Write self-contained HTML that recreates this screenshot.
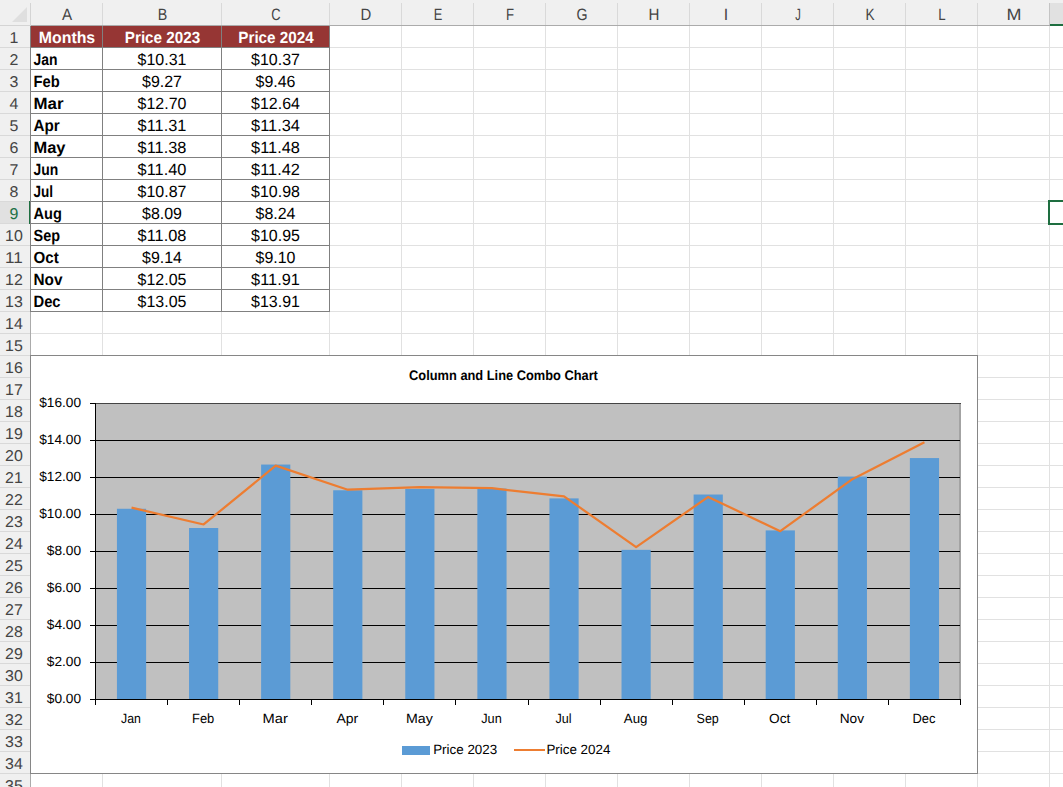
<!DOCTYPE html><html><head><meta charset="utf-8"><style>html,body{margin:0;padding:0;background:#fff;overflow:hidden}svg{display:block}text{text-rendering:geometricPrecision;font-family:"Liberation Sans",sans-serif}</style></head><body>
<svg width="1063" height="787" viewBox="0 0 1063 787">
<rect x="0" y="0" width="1063" height="26" fill="#f0f0f0"/>
<rect x="0" y="0" width="30" height="787" fill="#f0f0f0"/>
<rect x="1050" y="3" width="13" height="22" fill="#e1e1e1"/>
<rect x="0" y="202" width="29" height="21" fill="#e1e1e1"/>
<g shape-rendering="crispEdges">
<rect x="31" y="47" width="1032" height="1" fill="#e1e1e1"/>
<rect x="0" y="47" width="30" height="1" fill="#d9d9d9"/>
<rect x="31" y="69" width="1032" height="1" fill="#e1e1e1"/>
<rect x="0" y="69" width="30" height="1" fill="#d9d9d9"/>
<rect x="31" y="91" width="1032" height="1" fill="#e1e1e1"/>
<rect x="0" y="91" width="30" height="1" fill="#d9d9d9"/>
<rect x="31" y="113" width="1032" height="1" fill="#e1e1e1"/>
<rect x="0" y="113" width="30" height="1" fill="#d9d9d9"/>
<rect x="31" y="135" width="1032" height="1" fill="#e1e1e1"/>
<rect x="0" y="135" width="30" height="1" fill="#d9d9d9"/>
<rect x="31" y="157" width="1032" height="1" fill="#e1e1e1"/>
<rect x="0" y="157" width="30" height="1" fill="#d9d9d9"/>
<rect x="31" y="179" width="1032" height="1" fill="#e1e1e1"/>
<rect x="0" y="179" width="30" height="1" fill="#d9d9d9"/>
<rect x="31" y="201" width="1032" height="1" fill="#e1e1e1"/>
<rect x="0" y="201" width="30" height="1" fill="#d9d9d9"/>
<rect x="31" y="223" width="1032" height="1" fill="#e1e1e1"/>
<rect x="0" y="223" width="30" height="1" fill="#d9d9d9"/>
<rect x="31" y="245" width="1032" height="1" fill="#e1e1e1"/>
<rect x="0" y="245" width="30" height="1" fill="#d9d9d9"/>
<rect x="31" y="267" width="1032" height="1" fill="#e1e1e1"/>
<rect x="0" y="267" width="30" height="1" fill="#d9d9d9"/>
<rect x="31" y="289" width="1032" height="1" fill="#e1e1e1"/>
<rect x="0" y="289" width="30" height="1" fill="#d9d9d9"/>
<rect x="31" y="311" width="1032" height="1" fill="#e1e1e1"/>
<rect x="0" y="311" width="30" height="1" fill="#d9d9d9"/>
<rect x="31" y="333" width="1032" height="1" fill="#e1e1e1"/>
<rect x="0" y="333" width="30" height="1" fill="#d9d9d9"/>
<rect x="31" y="355" width="1032" height="1" fill="#e1e1e1"/>
<rect x="0" y="355" width="30" height="1" fill="#d9d9d9"/>
<rect x="31" y="377" width="1032" height="1" fill="#e1e1e1"/>
<rect x="0" y="377" width="30" height="1" fill="#d9d9d9"/>
<rect x="31" y="399" width="1032" height="1" fill="#e1e1e1"/>
<rect x="0" y="399" width="30" height="1" fill="#d9d9d9"/>
<rect x="31" y="421" width="1032" height="1" fill="#e1e1e1"/>
<rect x="0" y="421" width="30" height="1" fill="#d9d9d9"/>
<rect x="31" y="443" width="1032" height="1" fill="#e1e1e1"/>
<rect x="0" y="443" width="30" height="1" fill="#d9d9d9"/>
<rect x="31" y="465" width="1032" height="1" fill="#e1e1e1"/>
<rect x="0" y="465" width="30" height="1" fill="#d9d9d9"/>
<rect x="31" y="487" width="1032" height="1" fill="#e1e1e1"/>
<rect x="0" y="487" width="30" height="1" fill="#d9d9d9"/>
<rect x="31" y="509" width="1032" height="1" fill="#e1e1e1"/>
<rect x="0" y="509" width="30" height="1" fill="#d9d9d9"/>
<rect x="31" y="531" width="1032" height="1" fill="#e1e1e1"/>
<rect x="0" y="531" width="30" height="1" fill="#d9d9d9"/>
<rect x="31" y="553" width="1032" height="1" fill="#e1e1e1"/>
<rect x="0" y="553" width="30" height="1" fill="#d9d9d9"/>
<rect x="31" y="575" width="1032" height="1" fill="#e1e1e1"/>
<rect x="0" y="575" width="30" height="1" fill="#d9d9d9"/>
<rect x="31" y="597" width="1032" height="1" fill="#e1e1e1"/>
<rect x="0" y="597" width="30" height="1" fill="#d9d9d9"/>
<rect x="31" y="619" width="1032" height="1" fill="#e1e1e1"/>
<rect x="0" y="619" width="30" height="1" fill="#d9d9d9"/>
<rect x="31" y="641" width="1032" height="1" fill="#e1e1e1"/>
<rect x="0" y="641" width="30" height="1" fill="#d9d9d9"/>
<rect x="31" y="663" width="1032" height="1" fill="#e1e1e1"/>
<rect x="0" y="663" width="30" height="1" fill="#d9d9d9"/>
<rect x="31" y="685" width="1032" height="1" fill="#e1e1e1"/>
<rect x="0" y="685" width="30" height="1" fill="#d9d9d9"/>
<rect x="31" y="707" width="1032" height="1" fill="#e1e1e1"/>
<rect x="0" y="707" width="30" height="1" fill="#d9d9d9"/>
<rect x="31" y="729" width="1032" height="1" fill="#e1e1e1"/>
<rect x="0" y="729" width="30" height="1" fill="#d9d9d9"/>
<rect x="31" y="751" width="1032" height="1" fill="#e1e1e1"/>
<rect x="0" y="751" width="30" height="1" fill="#d9d9d9"/>
<rect x="31" y="773" width="1032" height="1" fill="#e1e1e1"/>
<rect x="0" y="773" width="30" height="1" fill="#d9d9d9"/>
<rect x="102" y="26" width="1" height="761" fill="#e1e1e1"/>
<rect x="102" y="3" width="1" height="22" fill="#d9d9d9"/>
<rect x="221" y="26" width="1" height="761" fill="#e1e1e1"/>
<rect x="221" y="3" width="1" height="22" fill="#d9d9d9"/>
<rect x="329" y="26" width="1" height="761" fill="#e1e1e1"/>
<rect x="329" y="3" width="1" height="22" fill="#d9d9d9"/>
<rect x="401" y="26" width="1" height="761" fill="#e1e1e1"/>
<rect x="401" y="3" width="1" height="22" fill="#d9d9d9"/>
<rect x="473" y="26" width="1" height="761" fill="#e1e1e1"/>
<rect x="473" y="3" width="1" height="22" fill="#d9d9d9"/>
<rect x="545" y="26" width="1" height="761" fill="#e1e1e1"/>
<rect x="545" y="3" width="1" height="22" fill="#d9d9d9"/>
<rect x="617" y="26" width="1" height="761" fill="#e1e1e1"/>
<rect x="617" y="3" width="1" height="22" fill="#d9d9d9"/>
<rect x="689" y="26" width="1" height="761" fill="#e1e1e1"/>
<rect x="689" y="3" width="1" height="22" fill="#d9d9d9"/>
<rect x="761" y="26" width="1" height="761" fill="#e1e1e1"/>
<rect x="761" y="3" width="1" height="22" fill="#d9d9d9"/>
<rect x="833" y="26" width="1" height="761" fill="#e1e1e1"/>
<rect x="833" y="3" width="1" height="22" fill="#d9d9d9"/>
<rect x="905" y="26" width="1" height="761" fill="#e1e1e1"/>
<rect x="905" y="3" width="1" height="22" fill="#d9d9d9"/>
<rect x="977" y="26" width="1" height="761" fill="#e1e1e1"/>
<rect x="977" y="3" width="1" height="22" fill="#d9d9d9"/>
<rect x="1049" y="26" width="1" height="761" fill="#e1e1e1"/>
<rect x="1049" y="3" width="1" height="22" fill="#c4c4c4"/>
<rect x="31" y="25" width="1032" height="1" fill="#ababab"/>
<rect x="30" y="26" width="1" height="761" fill="#ababab"/>
<rect x="0" y="25" width="31" height="1" fill="#d4d4d4"/>
<rect x="30" y="3" width="1" height="22" fill="#d4d4d4"/>
<rect x="1050" y="24" width="13" height="2" fill="#1e6e40"/>
<rect x="29" y="201" width="2" height="23" fill="#1e6e40"/>
<rect x="1048" y="200" width="2" height="25" fill="#1e6e40"/>
<rect x="1048" y="200" width="15" height="2" fill="#1e6e40"/>
<rect x="1048" y="223" width="15" height="2" fill="#1e6e40"/>
</g>
<polygon points="27,7 27,22 12,22" fill="#dfdfdf"/>
<text x="67.00" y="20.00" font-size="16.4" fill="#444" text-anchor="middle" textLength="10.13" lengthAdjust="spacingAndGlyphs">A</text>
<text x="162.50" y="20.00" font-size="16.4" fill="#444" text-anchor="middle" textLength="9.52" lengthAdjust="spacingAndGlyphs">B</text>
<text x="276.00" y="20.00" font-size="16.4" fill="#444" text-anchor="middle" textLength="9.33" lengthAdjust="spacingAndGlyphs">C</text>
<text x="366.00" y="20.00" font-size="16.4" fill="#444" text-anchor="middle" textLength="10.77" lengthAdjust="spacingAndGlyphs">D</text>
<text x="438.00" y="20.00" font-size="16.4" fill="#444" text-anchor="middle" textLength="8.54" lengthAdjust="spacingAndGlyphs">E</text>
<text x="510.00" y="20.00" font-size="16.4" fill="#444" text-anchor="middle" textLength="8.04" lengthAdjust="spacingAndGlyphs">F</text>
<text x="582.00" y="20.00" font-size="16.4" fill="#444" text-anchor="middle" textLength="11.04" lengthAdjust="spacingAndGlyphs">G</text>
<text x="654.00" y="20.00" font-size="16.4" fill="#444" text-anchor="middle" textLength="10.90" lengthAdjust="spacingAndGlyphs">H</text>
<text x="726.00" y="20.00" font-size="16.4" fill="#444" text-anchor="middle" textLength="4.41" lengthAdjust="spacingAndGlyphs">I</text>
<text x="798.00" y="20.00" font-size="16.4" fill="#444" text-anchor="middle" textLength="5.58" lengthAdjust="spacingAndGlyphs">J</text>
<text x="870.00" y="20.00" font-size="16.4" fill="#444" text-anchor="middle" textLength="9.09" lengthAdjust="spacingAndGlyphs">K</text>
<text x="942.00" y="20.00" font-size="16.4" fill="#444" text-anchor="middle" textLength="7.36" lengthAdjust="spacingAndGlyphs">L</text>
<text x="1014.00" y="20.00" font-size="16.4" fill="#444" text-anchor="middle" textLength="14.96" lengthAdjust="spacingAndGlyphs">M</text>
<text x="14.00" y="43.00" font-size="15.6" fill="#444" text-anchor="middle" textLength="8.87" lengthAdjust="spacingAndGlyphs">1</text>
<text x="14.00" y="65.00" font-size="15.6" fill="#444" text-anchor="middle" textLength="8.87" lengthAdjust="spacingAndGlyphs">2</text>
<text x="14.00" y="87.00" font-size="15.6" fill="#444" text-anchor="middle" textLength="8.87" lengthAdjust="spacingAndGlyphs">3</text>
<text x="14.00" y="109.00" font-size="15.6" fill="#444" text-anchor="middle" textLength="8.87" lengthAdjust="spacingAndGlyphs">4</text>
<text x="14.00" y="131.00" font-size="15.6" fill="#444" text-anchor="middle" textLength="8.87" lengthAdjust="spacingAndGlyphs">5</text>
<text x="14.00" y="153.00" font-size="15.6" fill="#444" text-anchor="middle" textLength="8.87" lengthAdjust="spacingAndGlyphs">6</text>
<text x="14.00" y="175.00" font-size="15.6" fill="#444" text-anchor="middle" textLength="8.87" lengthAdjust="spacingAndGlyphs">7</text>
<text x="14.00" y="197.00" font-size="15.6" fill="#444" text-anchor="middle" textLength="8.87" lengthAdjust="spacingAndGlyphs">8</text>
<text x="14.00" y="219.00" font-size="15.6" fill="#1e7145" text-anchor="middle" textLength="8.87" lengthAdjust="spacingAndGlyphs">9</text>
<text x="14.00" y="241.00" font-size="15.6" fill="#444" text-anchor="middle" textLength="17.74" lengthAdjust="spacingAndGlyphs">10</text>
<text x="14.00" y="263.00" font-size="15.6" fill="#444" text-anchor="middle" textLength="17.74" lengthAdjust="spacingAndGlyphs">11</text>
<text x="14.00" y="285.00" font-size="15.6" fill="#444" text-anchor="middle" textLength="17.74" lengthAdjust="spacingAndGlyphs">12</text>
<text x="14.00" y="307.00" font-size="15.6" fill="#444" text-anchor="middle" textLength="17.74" lengthAdjust="spacingAndGlyphs">13</text>
<text x="14.00" y="329.00" font-size="15.6" fill="#444" text-anchor="middle" textLength="17.74" lengthAdjust="spacingAndGlyphs">14</text>
<text x="14.00" y="351.00" font-size="15.6" fill="#444" text-anchor="middle" textLength="17.74" lengthAdjust="spacingAndGlyphs">15</text>
<text x="14.00" y="373.00" font-size="15.6" fill="#444" text-anchor="middle" textLength="17.74" lengthAdjust="spacingAndGlyphs">16</text>
<text x="14.00" y="395.00" font-size="15.6" fill="#444" text-anchor="middle" textLength="17.74" lengthAdjust="spacingAndGlyphs">17</text>
<text x="14.00" y="417.00" font-size="15.6" fill="#444" text-anchor="middle" textLength="17.74" lengthAdjust="spacingAndGlyphs">18</text>
<text x="14.00" y="439.00" font-size="15.6" fill="#444" text-anchor="middle" textLength="17.74" lengthAdjust="spacingAndGlyphs">19</text>
<text x="14.00" y="461.00" font-size="15.6" fill="#444" text-anchor="middle" textLength="17.74" lengthAdjust="spacingAndGlyphs">20</text>
<text x="14.00" y="483.00" font-size="15.6" fill="#444" text-anchor="middle" textLength="17.74" lengthAdjust="spacingAndGlyphs">21</text>
<text x="14.00" y="505.00" font-size="15.6" fill="#444" text-anchor="middle" textLength="17.74" lengthAdjust="spacingAndGlyphs">22</text>
<text x="14.00" y="527.00" font-size="15.6" fill="#444" text-anchor="middle" textLength="17.74" lengthAdjust="spacingAndGlyphs">23</text>
<text x="14.00" y="549.00" font-size="15.6" fill="#444" text-anchor="middle" textLength="17.74" lengthAdjust="spacingAndGlyphs">24</text>
<text x="14.00" y="571.00" font-size="15.6" fill="#444" text-anchor="middle" textLength="17.74" lengthAdjust="spacingAndGlyphs">25</text>
<text x="14.00" y="593.00" font-size="15.6" fill="#444" text-anchor="middle" textLength="17.74" lengthAdjust="spacingAndGlyphs">26</text>
<text x="14.00" y="615.00" font-size="15.6" fill="#444" text-anchor="middle" textLength="17.74" lengthAdjust="spacingAndGlyphs">27</text>
<text x="14.00" y="637.00" font-size="15.6" fill="#444" text-anchor="middle" textLength="17.74" lengthAdjust="spacingAndGlyphs">28</text>
<text x="14.00" y="659.00" font-size="15.6" fill="#444" text-anchor="middle" textLength="17.74" lengthAdjust="spacingAndGlyphs">29</text>
<text x="14.00" y="681.00" font-size="15.6" fill="#444" text-anchor="middle" textLength="17.74" lengthAdjust="spacingAndGlyphs">30</text>
<text x="14.00" y="703.00" font-size="15.6" fill="#444" text-anchor="middle" textLength="17.74" lengthAdjust="spacingAndGlyphs">31</text>
<text x="14.00" y="725.00" font-size="15.6" fill="#444" text-anchor="middle" textLength="17.74" lengthAdjust="spacingAndGlyphs">32</text>
<text x="14.00" y="747.00" font-size="15.6" fill="#444" text-anchor="middle" textLength="17.74" lengthAdjust="spacingAndGlyphs">33</text>
<text x="14.00" y="769.00" font-size="15.6" fill="#444" text-anchor="middle" textLength="17.74" lengthAdjust="spacingAndGlyphs">34</text>
<text x="14.00" y="791.00" font-size="15.6" fill="#444" text-anchor="middle" textLength="17.74" lengthAdjust="spacingAndGlyphs">35</text>
<rect x="31" y="26" width="298" height="21" fill="#963634"/>
<g shape-rendering="crispEdges">
<rect x="30" y="47" width="300" height="1" fill="#808080"/>
<rect x="30" y="69" width="300" height="1" fill="#808080"/>
<rect x="30" y="91" width="300" height="1" fill="#808080"/>
<rect x="30" y="113" width="300" height="1" fill="#808080"/>
<rect x="30" y="135" width="300" height="1" fill="#808080"/>
<rect x="30" y="157" width="300" height="1" fill="#808080"/>
<rect x="30" y="179" width="300" height="1" fill="#808080"/>
<rect x="30" y="201" width="300" height="1" fill="#808080"/>
<rect x="30" y="223" width="300" height="1" fill="#808080"/>
<rect x="30" y="245" width="300" height="1" fill="#808080"/>
<rect x="30" y="267" width="300" height="1" fill="#808080"/>
<rect x="30" y="289" width="300" height="1" fill="#808080"/>
<rect x="30" y="311" width="300" height="1" fill="#808080"/>
<rect x="30" y="26" width="1" height="286" fill="#808080"/>
<rect x="102" y="26" width="1" height="286" fill="#808080"/>
<rect x="221" y="26" width="1" height="286" fill="#808080"/>
<rect x="329" y="26" width="1" height="286" fill="#808080"/>
</g>
<text x="67.00" y="43.20" font-size="16.3" font-weight="bold" fill="#fff" text-anchor="middle" textLength="56.39" lengthAdjust="spacingAndGlyphs">Months</text>
<text x="162.50" y="43.20" font-size="16.3" font-weight="bold" fill="#fff" text-anchor="middle" textLength="75.38" lengthAdjust="spacingAndGlyphs">Price 2023</text>
<text x="276.00" y="43.20" font-size="16.3" font-weight="bold" fill="#fff" text-anchor="middle" textLength="75.38" lengthAdjust="spacingAndGlyphs">Price 2024</text>
<text x="33.50" y="64.80" font-size="16.3" font-weight="bold" fill="#000" textLength="23.96" lengthAdjust="spacingAndGlyphs">Jan</text>
<text x="162.00" y="64.80" font-size="16.3" fill="#000" text-anchor="middle" textLength="48.77" lengthAdjust="spacingAndGlyphs">$10.31</text>
<text x="275.50" y="64.80" font-size="16.3" fill="#000" text-anchor="middle" textLength="48.77" lengthAdjust="spacingAndGlyphs">$10.37</text>
<text x="33.50" y="86.80" font-size="16.3" font-weight="bold" fill="#000" textLength="26.23" lengthAdjust="spacingAndGlyphs">Feb</text>
<text x="162.00" y="86.80" font-size="16.3" fill="#000" text-anchor="middle" textLength="39.90" lengthAdjust="spacingAndGlyphs">$9.27</text>
<text x="275.50" y="86.80" font-size="16.3" fill="#000" text-anchor="middle" textLength="39.90" lengthAdjust="spacingAndGlyphs">$9.46</text>
<text x="33.50" y="108.80" font-size="16.3" font-weight="bold" fill="#000" textLength="29.99" lengthAdjust="spacingAndGlyphs">Mar</text>
<text x="162.00" y="108.80" font-size="16.3" fill="#000" text-anchor="middle" textLength="48.77" lengthAdjust="spacingAndGlyphs">$12.70</text>
<text x="275.50" y="108.80" font-size="16.3" fill="#000" text-anchor="middle" textLength="48.77" lengthAdjust="spacingAndGlyphs">$12.64</text>
<text x="33.50" y="130.80" font-size="16.3" font-weight="bold" fill="#000" textLength="26.22" lengthAdjust="spacingAndGlyphs">Apr</text>
<text x="162.00" y="130.80" font-size="16.3" fill="#000" text-anchor="middle" textLength="48.77" lengthAdjust="spacingAndGlyphs">$11.31</text>
<text x="275.50" y="130.80" font-size="16.3" fill="#000" text-anchor="middle" textLength="48.77" lengthAdjust="spacingAndGlyphs">$11.34</text>
<text x="33.50" y="152.80" font-size="16.3" font-weight="bold" fill="#000" textLength="32.03" lengthAdjust="spacingAndGlyphs">May</text>
<text x="162.00" y="152.80" font-size="16.3" fill="#000" text-anchor="middle" textLength="48.77" lengthAdjust="spacingAndGlyphs">$11.38</text>
<text x="275.50" y="152.80" font-size="16.3" fill="#000" text-anchor="middle" textLength="48.77" lengthAdjust="spacingAndGlyphs">$11.48</text>
<text x="33.50" y="174.80" font-size="16.3" font-weight="bold" fill="#000" textLength="24.72" lengthAdjust="spacingAndGlyphs">Jun</text>
<text x="162.00" y="174.80" font-size="16.3" fill="#000" text-anchor="middle" textLength="48.77" lengthAdjust="spacingAndGlyphs">$11.40</text>
<text x="275.50" y="174.80" font-size="16.3" fill="#000" text-anchor="middle" textLength="48.77" lengthAdjust="spacingAndGlyphs">$11.42</text>
<text x="33.50" y="196.80" font-size="16.3" font-weight="bold" fill="#000" textLength="19.59" lengthAdjust="spacingAndGlyphs">Jul</text>
<text x="162.00" y="196.80" font-size="16.3" fill="#000" text-anchor="middle" textLength="48.77" lengthAdjust="spacingAndGlyphs">$10.87</text>
<text x="275.50" y="196.80" font-size="16.3" fill="#000" text-anchor="middle" textLength="48.77" lengthAdjust="spacingAndGlyphs">$10.98</text>
<text x="33.50" y="218.80" font-size="16.3" font-weight="bold" fill="#000" textLength="28.34" lengthAdjust="spacingAndGlyphs">Aug</text>
<text x="162.00" y="218.80" font-size="16.3" fill="#000" text-anchor="middle" textLength="39.90" lengthAdjust="spacingAndGlyphs">$8.09</text>
<text x="275.50" y="218.80" font-size="16.3" fill="#000" text-anchor="middle" textLength="39.90" lengthAdjust="spacingAndGlyphs">$8.24</text>
<text x="33.50" y="240.80" font-size="16.3" font-weight="bold" fill="#000" textLength="26.49" lengthAdjust="spacingAndGlyphs">Sep</text>
<text x="162.00" y="240.80" font-size="16.3" fill="#000" text-anchor="middle" textLength="48.77" lengthAdjust="spacingAndGlyphs">$11.08</text>
<text x="275.50" y="240.80" font-size="16.3" fill="#000" text-anchor="middle" textLength="48.77" lengthAdjust="spacingAndGlyphs">$10.95</text>
<text x="33.50" y="262.80" font-size="16.3" font-weight="bold" fill="#000" textLength="25.21" lengthAdjust="spacingAndGlyphs">Oct</text>
<text x="162.00" y="262.80" font-size="16.3" fill="#000" text-anchor="middle" textLength="39.90" lengthAdjust="spacingAndGlyphs">$9.14</text>
<text x="275.50" y="262.80" font-size="16.3" fill="#000" text-anchor="middle" textLength="39.90" lengthAdjust="spacingAndGlyphs">$9.10</text>
<text x="33.50" y="284.80" font-size="16.3" font-weight="bold" fill="#000" textLength="28.99" lengthAdjust="spacingAndGlyphs">Nov</text>
<text x="162.00" y="284.80" font-size="16.3" fill="#000" text-anchor="middle" textLength="48.77" lengthAdjust="spacingAndGlyphs">$12.05</text>
<text x="275.50" y="284.80" font-size="16.3" fill="#000" text-anchor="middle" textLength="48.77" lengthAdjust="spacingAndGlyphs">$11.91</text>
<text x="33.50" y="306.80" font-size="16.3" font-weight="bold" fill="#000" textLength="27.09" lengthAdjust="spacingAndGlyphs">Dec</text>
<text x="162.00" y="306.80" font-size="16.3" fill="#000" text-anchor="middle" textLength="48.77" lengthAdjust="spacingAndGlyphs">$13.05</text>
<text x="275.50" y="306.80" font-size="16.3" fill="#000" text-anchor="middle" textLength="48.77" lengthAdjust="spacingAndGlyphs">$13.91</text>
<g shape-rendering="crispEdges">
<rect x="30.5" y="355.5" width="947" height="418" fill="#fff" stroke="#868686" stroke-width="1"/>
<rect x="95" y="403" width="865" height="296" fill="#c0c0c0"/>
<rect x="959" y="403" width="2" height="296" fill="#a3a3a3"/>
<rect x="90" y="403" width="5" height="1" fill="#000"/>
<rect x="95" y="403" width="866" height="1" fill="#444"/>
<rect x="90" y="440" width="870" height="1" fill="#000"/>
<rect x="90" y="477" width="870" height="1" fill="#000"/>
<rect x="90" y="514" width="870" height="1" fill="#000"/>
<rect x="90" y="551" width="870" height="1" fill="#000"/>
<rect x="90" y="588" width="870" height="1" fill="#000"/>
<rect x="90" y="625" width="870" height="1" fill="#000"/>
<rect x="90" y="662" width="870" height="1" fill="#000"/>
<rect x="95" y="403" width="1" height="297" fill="#000"/>
</g>
<rect x="116.94" y="508.76" width="29.2" height="190.74" fill="#5b9bd5"/>
<rect x="189.03" y="528.00" width="29.2" height="171.50" fill="#5b9bd5"/>
<rect x="261.11" y="464.55" width="29.2" height="234.95" fill="#5b9bd5"/>
<rect x="333.19" y="490.26" width="29.2" height="209.24" fill="#5b9bd5"/>
<rect x="405.27" y="488.97" width="29.2" height="210.53" fill="#5b9bd5"/>
<rect x="477.36" y="488.60" width="29.2" height="210.90" fill="#5b9bd5"/>
<rect x="549.44" y="498.40" width="29.2" height="201.09" fill="#5b9bd5"/>
<rect x="621.52" y="549.84" width="29.2" height="149.66" fill="#5b9bd5"/>
<rect x="693.61" y="494.52" width="29.2" height="204.98" fill="#5b9bd5"/>
<rect x="765.69" y="530.41" width="29.2" height="169.09" fill="#5b9bd5"/>
<rect x="837.77" y="476.57" width="29.2" height="222.93" fill="#5b9bd5"/>
<rect x="909.86" y="458.07" width="29.2" height="241.43" fill="#5b9bd5"/>
<g shape-rendering="crispEdges">
<rect x="90" y="699" width="871" height="1" fill="#000"/>
<rect x="95" y="699" width="1" height="6" fill="#000"/>
<rect x="167" y="699" width="1" height="6" fill="#000"/>
<rect x="239" y="699" width="1" height="6" fill="#000"/>
<rect x="311" y="699" width="1" height="6" fill="#000"/>
<rect x="383" y="699" width="1" height="6" fill="#000"/>
<rect x="455" y="699" width="1" height="6" fill="#000"/>
<rect x="528" y="699" width="1" height="6" fill="#000"/>
<rect x="600" y="699" width="1" height="6" fill="#000"/>
<rect x="672" y="699" width="1" height="6" fill="#000"/>
<rect x="744" y="699" width="1" height="6" fill="#000"/>
<rect x="816" y="699" width="1" height="6" fill="#000"/>
<rect x="888" y="699" width="1" height="6" fill="#000"/>
<rect x="960" y="699" width="1" height="6" fill="#000"/>
</g>
<polyline points="131.54,507.65 203.62,524.49 275.71,465.66 347.79,489.71 419.88,487.12 491.96,488.23 564.04,496.37 636.12,547.06 708.21,496.93 780.29,531.15 852.38,479.16 924.46,442.17" fill="none" stroke="#ed7d31" stroke-width="2.25" stroke-linejoin="round" stroke-linecap="butt"/>
<text text-anchor="middle" x="503.50" y="380.30" font-size="13.8" font-weight="bold" fill="#000" textLength="188.81" lengthAdjust="spacingAndGlyphs">Column and Line Combo Chart</text>
<text x="81.00" y="703.30" font-size="13.4" fill="#000" text-anchor="end" textLength="34.20" lengthAdjust="spacingAndGlyphs">$0.00</text>
<text x="81.00" y="666.30" font-size="13.4" fill="#000" text-anchor="end" textLength="34.20" lengthAdjust="spacingAndGlyphs">$2.00</text>
<text x="81.00" y="629.30" font-size="13.4" fill="#000" text-anchor="end" textLength="34.20" lengthAdjust="spacingAndGlyphs">$4.00</text>
<text x="81.00" y="592.30" font-size="13.4" fill="#000" text-anchor="end" textLength="34.20" lengthAdjust="spacingAndGlyphs">$6.00</text>
<text x="81.00" y="555.30" font-size="13.4" fill="#000" text-anchor="end" textLength="34.20" lengthAdjust="spacingAndGlyphs">$8.00</text>
<text x="81.00" y="518.30" font-size="13.4" fill="#000" text-anchor="end" textLength="41.80" lengthAdjust="spacingAndGlyphs">$10.00</text>
<text x="81.00" y="481.30" font-size="13.4" fill="#000" text-anchor="end" textLength="41.80" lengthAdjust="spacingAndGlyphs">$12.00</text>
<text x="81.00" y="444.30" font-size="13.4" fill="#000" text-anchor="end" textLength="41.80" lengthAdjust="spacingAndGlyphs">$14.00</text>
<text x="81.00" y="407.30" font-size="13.4" fill="#000" text-anchor="end" textLength="41.80" lengthAdjust="spacingAndGlyphs">$16.00</text>
<text x="131.04" y="722.80" font-size="13.4" fill="#000" text-anchor="middle" textLength="19.85" lengthAdjust="spacingAndGlyphs">Jan</text>
<text x="203.12" y="722.80" font-size="13.4" fill="#000" text-anchor="middle" textLength="22.24" lengthAdjust="spacingAndGlyphs">Feb</text>
<text x="275.21" y="722.80" font-size="13.4" fill="#000" text-anchor="middle" textLength="25.24" lengthAdjust="spacingAndGlyphs">Mar</text>
<text x="347.29" y="722.80" font-size="13.4" fill="#000" text-anchor="middle" textLength="21.79" lengthAdjust="spacingAndGlyphs">Apr</text>
<text x="419.38" y="722.80" font-size="13.4" fill="#000" text-anchor="middle" textLength="26.80" lengthAdjust="spacingAndGlyphs">May</text>
<text x="491.46" y="722.80" font-size="13.4" fill="#000" text-anchor="middle" textLength="20.54" lengthAdjust="spacingAndGlyphs">Jun</text>
<text x="563.54" y="722.80" font-size="13.4" fill="#000" text-anchor="middle" textLength="16.11" lengthAdjust="spacingAndGlyphs">Jul</text>
<text x="635.62" y="722.80" font-size="13.4" fill="#000" text-anchor="middle" textLength="23.62" lengthAdjust="spacingAndGlyphs">Aug</text>
<text x="707.71" y="722.80" font-size="13.4" fill="#000" text-anchor="middle" textLength="22.24" lengthAdjust="spacingAndGlyphs">Sep</text>
<text x="779.79" y="722.80" font-size="13.4" fill="#000" text-anchor="middle" textLength="21.30" lengthAdjust="spacingAndGlyphs">Oct</text>
<text x="851.88" y="722.80" font-size="13.4" fill="#000" text-anchor="middle" textLength="24.37" lengthAdjust="spacingAndGlyphs">Nov</text>
<text x="923.96" y="722.80" font-size="13.4" fill="#000" text-anchor="middle" textLength="23.03" lengthAdjust="spacingAndGlyphs">Dec</text>
<rect x="402" y="746" width="28" height="9" fill="#5b9bd5"/>
<text x="433.20" y="754.10" font-size="13.4" fill="#000" textLength="64.03" lengthAdjust="spacingAndGlyphs">Price 2023</text>
<rect x="514" y="749" width="31" height="2" fill="#ed7d31"/>
<text x="546.40" y="754.10" font-size="13.4" fill="#000" textLength="64.03" lengthAdjust="spacingAndGlyphs">Price 2024</text>
</svg></body></html>
